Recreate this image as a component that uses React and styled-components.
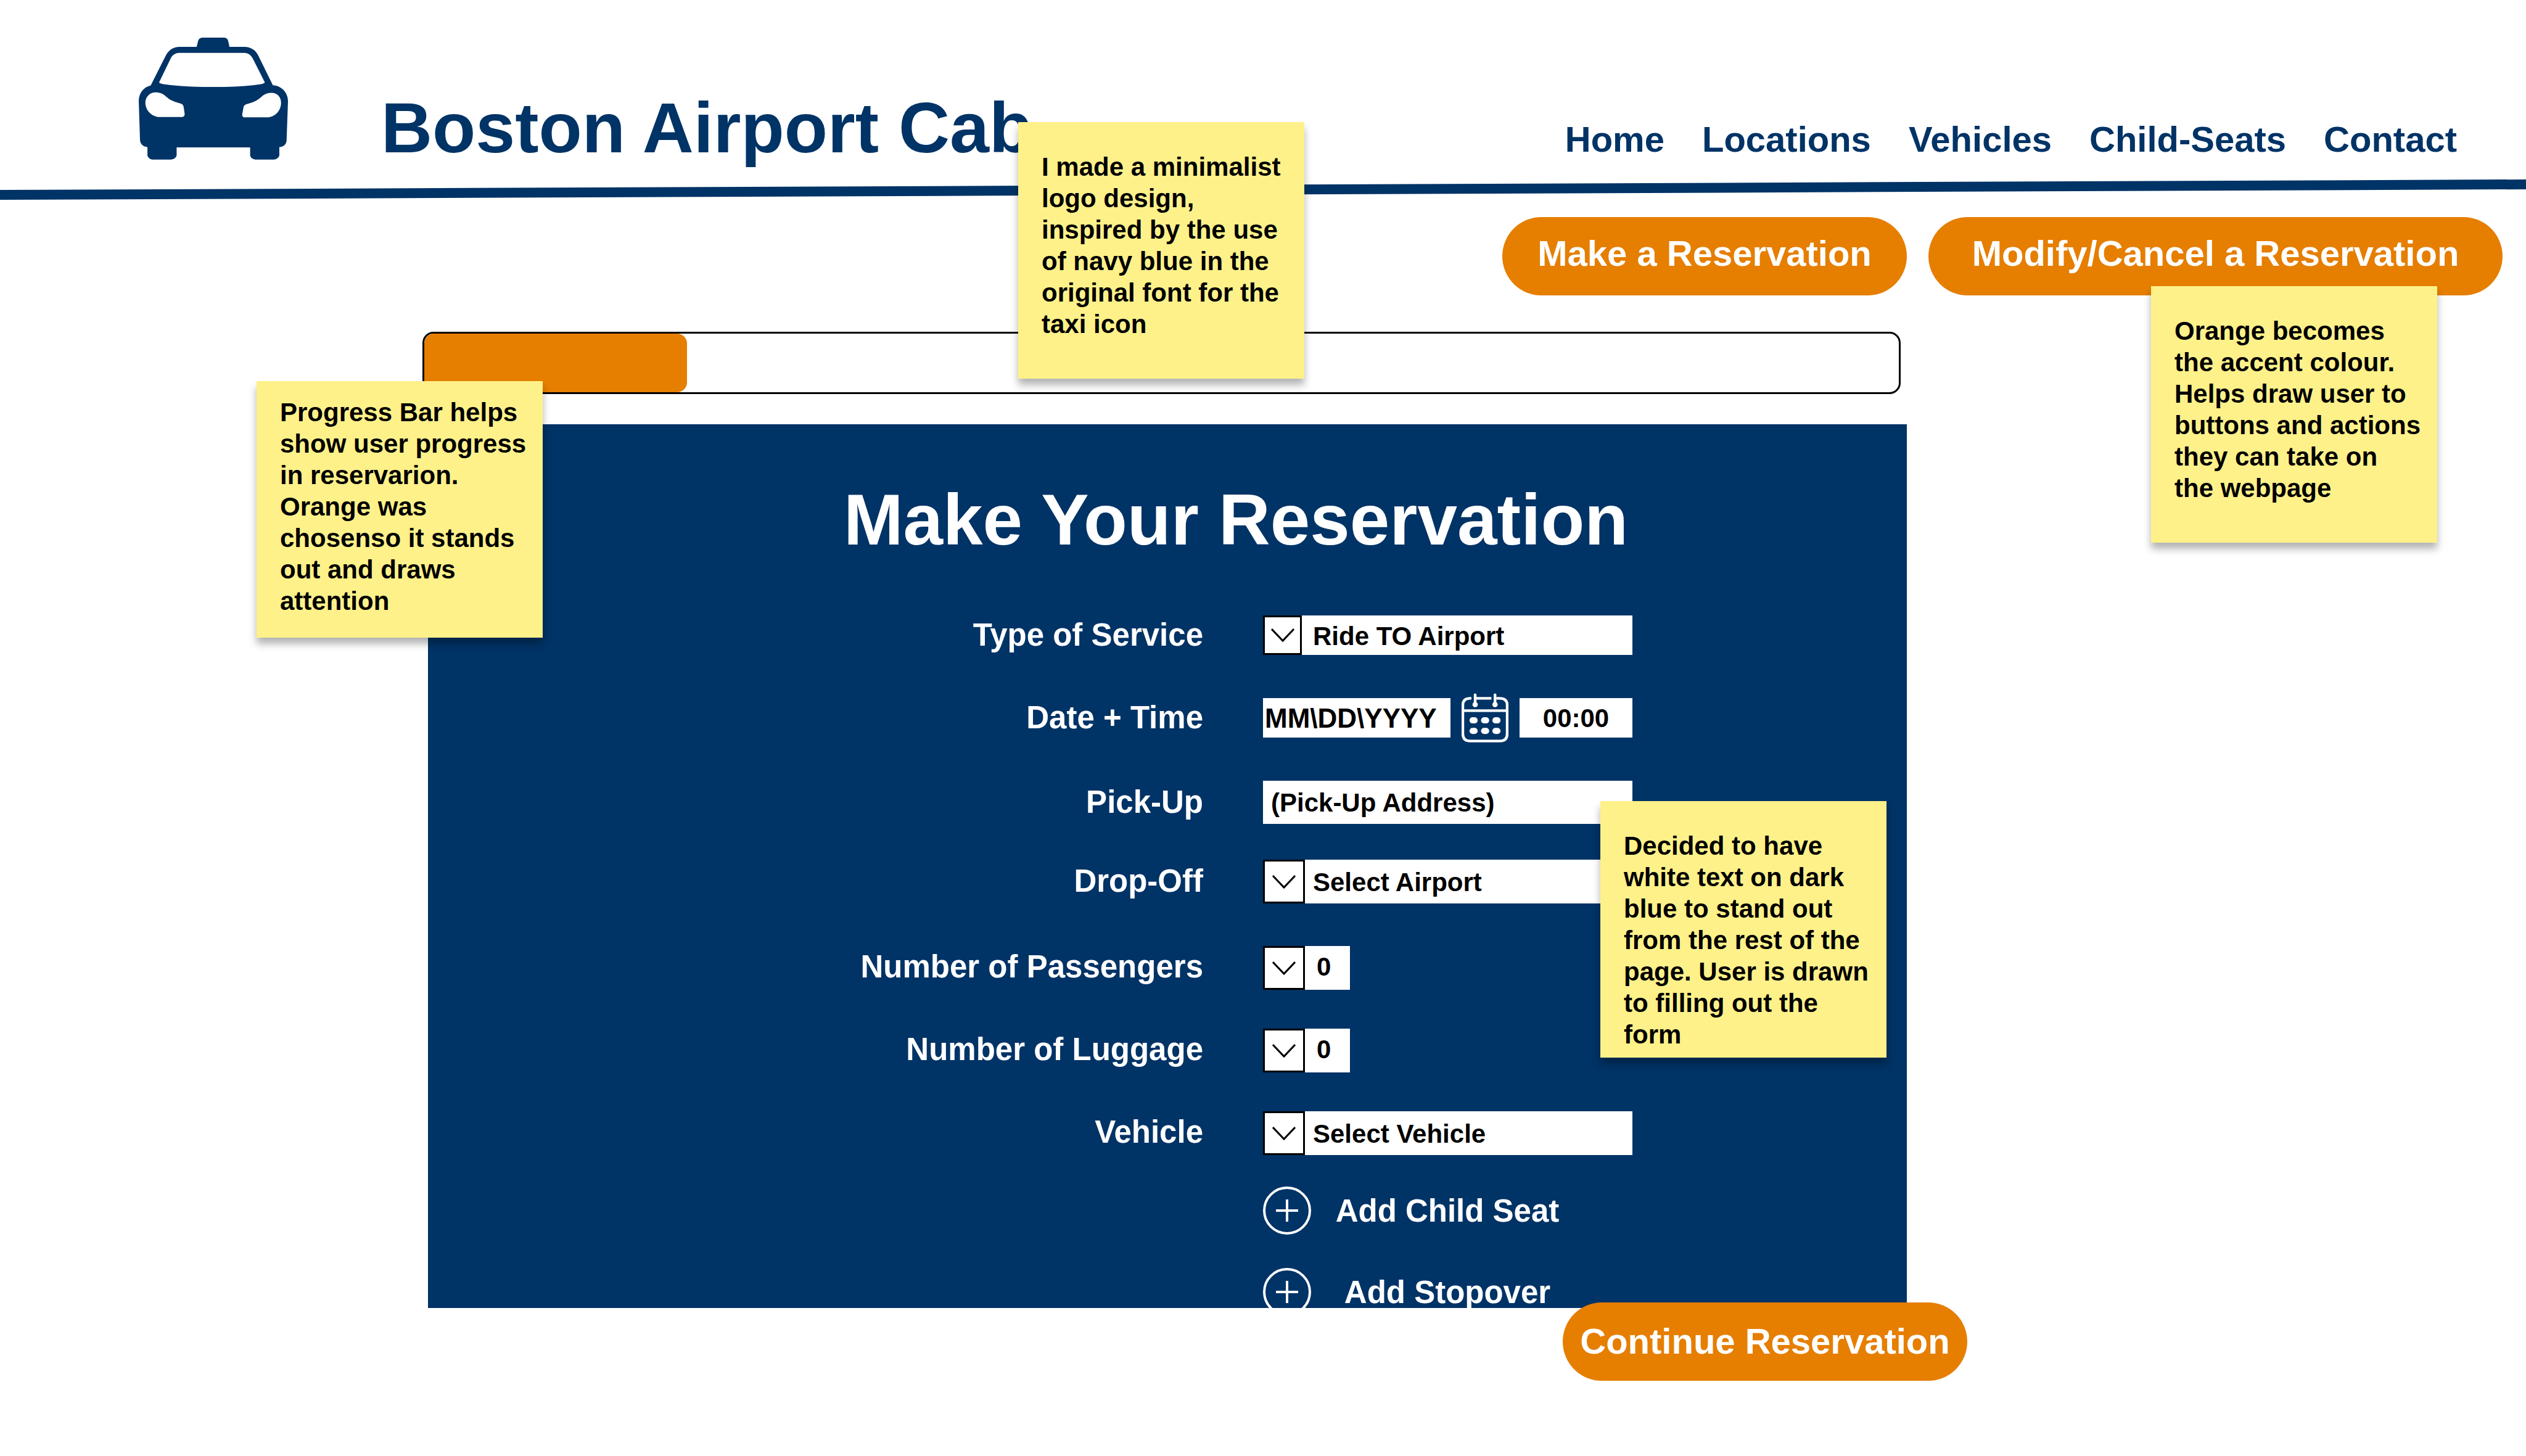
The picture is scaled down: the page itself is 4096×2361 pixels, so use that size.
import React from "react";
import styled, { createGlobalStyle } from "styled-components";

const NAVY = "#003366";
const ORANGE = "#e67e00";
const NOTE_YELLOW = "#fff189";

const GlobalStyle = createGlobalStyle`
  *, *::before, *::after { box-sizing: border-box; }
  body { margin: 0; background: #fff; }
  body, button, input, select {
    font-family: "Liberation Sans", Arial, Helvetica, sans-serif;
    font-weight: 700;
  }
`;

const Page = styled.div`
  position: relative;
  padding-bottom: 122px;
  overflow: hidden;
`;

const Header = styled.header`
  display: flex;
  align-items: flex-end;
  padding: 61px 112px 0 225px;
`;

const TaxiLogo = styled.svg`
  display: block;
  flex: none;
  width: 242px;
  height: 198px;
  fill: ${NAVY};
`;

const Brand = styled.h1`
  margin: 0 auto 0 151px;
  color: ${NAVY};
  font-size: 115px;
  line-height: 104px;
  white-space: nowrap;
`;

const Nav = styled.nav`
  display: flex;
  gap: 61px;
`;

const NavLink = styled.a`
  color: ${NAVY};
  font-size: 58px;
  line-height: 66px;
  text-decoration: none;
`;

const HeaderRule = styled.svg`
  display: block;
  width: 100%;
  height: 33px;
  margin-top: 32px;
  fill: ${NAVY};
`;

const Actions = styled.div`
  display: flex;
  justify-content: flex-end;
  gap: 35px;
  margin-top: 28px;
  padding-right: 38px;
`;

const PillButton = styled.button`
  width: ${(p) => (p.$wide ? 931 : 656)}px;
  height: 127px;
  padding: 0 0 ${(p) => (p.$raised ? 10 : 2)}px;
  border: 0;
  border-radius: 64px;
  background: ${ORANGE};
  color: #fff;
  font-size: 58px;
  white-space: nowrap;
`;

const ProgressTrack = styled.div`
  height: 101px;
  margin: 59px 1014px 0 685px;
  border: 3px solid #000;
  border-radius: 18px;
`;

const ProgressFill = styled.div`
  height: 100%;
  border-radius: 16px;
  background: ${ORANGE};
`;

const Panel = styled.main`
  max-height: 1433px;
  margin: 49px 1004px 0 694px;
  padding: 98px 445px 0 667px;
  background: ${NAVY};
  color: #fff;
  overflow: hidden;
`;

const PanelTitle = styled.h2`
  margin: 0 0 97px;
  font-size: 116px;
  line-height: 115px;
  text-align: center;
  white-space: nowrap;
`;

const FormRow = styled.div`
  display: grid;
  grid-template-columns: 1fr 599px;
  grid-template-rows: 100%;
  column-gap: 97px;
  align-items: center;
  height: ${(p) => p.$height}px;
  margin-bottom: ${(p) => p.$gap}px;
`;

const RowLabel = styled.label`
  font-size: 51px;
  line-height: 58px;
  text-align: right;
  white-space: nowrap;
`;

const Controls = styled.div`
  grid-column: 2;
  display: flex;
  align-items: center;
  height: 100%;
`;

const TextField = styled.input`
  flex: ${(p) => (p.$width ? "none" : "1")};
  width: ${(p) => (p.$width ? `${p.$width}px` : "auto")};
  min-width: 0;
  height: 100%;
  padding: 2px 0 0 ${(p) => p.$inset || 0}px;
  border: 0;
  border-radius: 0;
  background: #fff;
  color: #000;
  font-size: ${(p) => (p.$large ? 44 : 42)}px;
  text-align: ${(p) => (p.$centered ? "center" : "left")};
  &::placeholder { color: #000; opacity: 1; }
`;

const CalendarButton = styled.button`
  flex: none;
  width: 112px;
  padding: 0;
  border: 0;
  background: none;
  line-height: 0;
`;

const SelectBox = styled.div`
  display: grid;
  width: ${(p) => (p.$short ? "141px" : "100%")};
  height: 100%;
  & > * { grid-area: 1 / 1; }
`;

const Select = styled.select`
  appearance: none;
  width: 100%;
  height: 100%;
  padding: ${(p) => (p.$short ? "0 0 4px 87px" : "2px 0 0 81px")};
  border: 0;
  border-radius: 0;
  background: #fff;
  color: #000;
  font-size: 42px;
`;

const ChevronBox = styled.span`
  z-index: 1;
  display: flex;
  align-items: center;
  justify-content: center;
  width: ${(p) => (p.$small ? 63 : 68)}px;
  height: ${(p) => (p.$small ? 64 : 71)}px;
  border: 3px solid #000;
  background: #fff;
  pointer-events: none;
`;

const AddButton = styled.button`
  display: flex;
  align-items: center;
  height: 78px;
  padding: 0;
  border: 0;
  background: none;
  color: #fff;
`;

const AddText = styled.span`
  width: 442px;
  padding-top: 2px;
  font-size: 51px;
  line-height: 58px;
  text-align: center;
  white-space: nowrap;
`;

const Footer = styled.div`
  position: relative;
  display: flex;
  justify-content: flex-end;
  margin-top: -9px;
  padding-right: 906px;
`;

const StickyNote = styled.aside`
  position: absolute;
  left: ${(p) => p.$x}px;
  top: ${(p) => p.$y}px;
  width: 464px;
  height: 416px;
  padding: ${(p) => (p.$snug ? 25 : 47)}px 20px 0 38px;
  background: ${NOTE_YELLOW};
  color: #000;
  font-size: 42px;
  line-height: 51px;
  box-shadow: 0 10px 12px rgba(0, 0, 0, 0.3);
`;

const NAV_ITEMS = ["Home", "Locations", "Vehicles", "Child-Seats", "Contact"];

const NOTES = [
  { x: 1651, y: 198, text: "I made a minimalist logo design, inspired by the use of navy blue in the original font for the taxi icon" },
  { x: 3488, y: 464, text: <>Orange becomes the accent colour. Helps draw user to buttons and actions they can take on<br />the webpage</> },
  { x: 416, y: 618, snug: true, text: "Progress Bar helps show user progress in reservarion. Orange was chosenso it stands out and draws attention" },
  { x: 2595, y: 1299, text: "Decided to have white text on dark blue to stand out from the rest of the page. User is drawn to filling out the form" },
];

function Taxi() {
  return (
    <TaxiLogo viewBox="38 120 946 770" preserveAspectRatio="none" aria-hidden="true">
      <path
        fillRule="evenodd"
        d="M405 178 L414 142 Q419 121 442 120 H580 Q600 121 605 142 L613 178 H710
           C748 179 778 198 794 230 L888 420 C942 422 984 466 984 520 L975 768
           C974 792 954 810 929 810 V864 C924 880 908 889 892 889 H778
           C762 888 748 879 744 864 V812 H278 V864 C273 880 257 888 242 889 H128
           C112 889 98 880 93 864 V810 C68 810 47 792 46 766 L38 520
           C38 470 68 432 114 421 L210 232 C226 200 256 178 296 178 Z
           M292 216 C268 218 250 230 240 252 L167 402 C172 412 200 415 240 419
           C330 428 420 431 510 431 C600 431 690 428 770 419 C810 415 832 412 837 402
           L760 250 C749 230 732 217 708 216 Z
           M144 465 C108 465 80 494 80 530 C80 578 120 618 168 621 H310
           C323 621 330 612 329 600 L322 555 C320 546 314 539 305 536
           C268 525 240 518 212 492 C194 475 172 465 144 465 Z
           M880 468 C850 468 830 480 812 496 C784 521 758 530 720 540
           C709 544 703 551 702 560 L694 602 C692 615 698 623 710 623 H852
           C904 620 940 580 940 530 C940 494 914 468 880 468 Z"
      />
    </TaxiLogo>
  );
}

function CalendarIcon() {
  return (
    <svg width="76" height="80" viewBox="49 29 297 316" preserveAspectRatio="none" fill="none" stroke="#fff" strokeWidth="17" aria-hidden="true">
      <path d="M111 62 H104 Q57 62 57 106 V290 Q57 336 104 336 H291 Q338 336 338 290 V106 Q338 62 291 62 H269 M238 62 H142" />
      <path d="M57 141 H338" />
      <path d="M135 39 V96 M261 39 V96" strokeLinecap="round" />
      <g fill="#fff" stroke="none">
        <circle cx="135" cy="102" r="17" />
        <circle cx="261" cy="102" r="17" />
        {[203, 271].map((cy) =>
          [125, 198, 270].map((cx) => (
            <rect key={`${cx}-${cy}`} x={cx - 26} y={cy - 20} width="52" height="40" rx="20" />
          ))
        )}
      </g>
    </svg>
  );
}

function PlusCircle() {
  return (
    <svg width="78" height="78" viewBox="0 0 78 78" fill="none" stroke="#fff" strokeWidth="4" aria-hidden="true">
      <circle cx="39" cy="39" r="37" />
      <path d="M21 39 H57 M39 21 V57" />
    </svg>
  );
}

function DropDown({ id, value, short, small }) {
  return (
    <SelectBox $short={short}>
      <Select id={id} $short={short} defaultValue={value}>
        <option value={value}>{value}</option>
      </Select>
      <ChevronBox $small={small}>
        <svg width="38" height="24" viewBox="0 0 38 24" fill="none" stroke="#000" strokeWidth="3" aria-hidden="true">
          <path d="M1 2 L19 21 L37 2" />
        </svg>
      </ChevronBox>
    </SelectBox>
  );
}

function Row({ id, label, height, gap, children }) {
  return (
    <FormRow $height={height} $gap={gap}>
      {label && <RowLabel htmlFor={id}>{label}</RowLabel>}
      <Controls>{children}</Controls>
    </FormRow>
  );
}

export default function App() {
  const progress = 17.8;
  return (
    <Page>
      <GlobalStyle />
      <Header>
        <Taxi />
        <Brand>Boston Airport Cab</Brand>
        <Nav>
          {NAV_ITEMS.map((item) => (
            <NavLink key={item} href="#">{item}</NavLink>
          ))}
        </Nav>
      </Header>
      <HeaderRule viewBox="0 0 4096 33" preserveAspectRatio="none" aria-hidden="true">
        <polygon points="0,17 4096,0 4096,16 0,33" />
      </HeaderRule>

      <Actions>
        <PillButton type="button" $raised>Make a Reservation</PillButton>
        <PillButton type="button" $wide $raised>Modify/Cancel a Reservation</PillButton>
      </Actions>

      <ProgressTrack role="progressbar" aria-valuenow={progress} aria-valuemin={0} aria-valuemax={100}>
        <ProgressFill style={{ width: `${progress}%` }} />
      </ProgressTrack>

      <Panel>
        <PanelTitle>Make Your Reservation</PanelTitle>
        <form>
          <Row id="service" label="Type of Service" height={64} gap={70}>
            <DropDown id="service" value="Ride TO Airport" small />
          </Row>
          <Row id="date" label="Date + Time" height={64} gap={70}>
            <TextField id="date" placeholder="MM\DD\YYYY" $width={304} $inset={3} $large />
            <CalendarButton type="button" aria-label="Open calendar">
              <CalendarIcon />
            </CalendarButton>
            <TextField aria-label="Time" placeholder="00:00" $centered />
          </Row>
          <Row id="pickup" label="Pick-Up" height={70} gap={58}>
            <TextField id="pickup" placeholder="(Pick-Up Address)" $inset={13} />
          </Row>
          <Row id="dropoff" label="Drop-Off" height={70} gap={70}>
            <DropDown id="dropoff" value="Select Airport" />
          </Row>
          <Row id="passengers" label="Number of Passengers" height={68} gap={66}>
            <DropDown id="passengers" value="0" short />
          </Row>
          <Row id="luggage" label="Number of Luggage" height={68} gap={66}>
            <DropDown id="luggage" value="0" short />
          </Row>
          <Row id="vehicle" label="Vehicle" height={68} gap={54}>
            <DropDown id="vehicle" value="Select Vehicle" />
          </Row>
          <Row height={78} gap={54}>
            <AddButton type="button"><PlusCircle /><AddText>Add Child Seat</AddText></AddButton>
          </Row>
          <Row height={78} gap={54}>
            <AddButton type="button"><PlusCircle /><AddText>Add Stopover</AddText></AddButton>
          </Row>
        </form>
      </Panel>

      <Footer>
        <PillButton type="button">Continue Reservation</PillButton>
      </Footer>

      {NOTES.map((note) => (
        <StickyNote key={note.x} $x={note.x} $y={note.y} $snug={note.snug}>
          {note.text}
        </StickyNote>
      ))}
    </Page>
  );
}
